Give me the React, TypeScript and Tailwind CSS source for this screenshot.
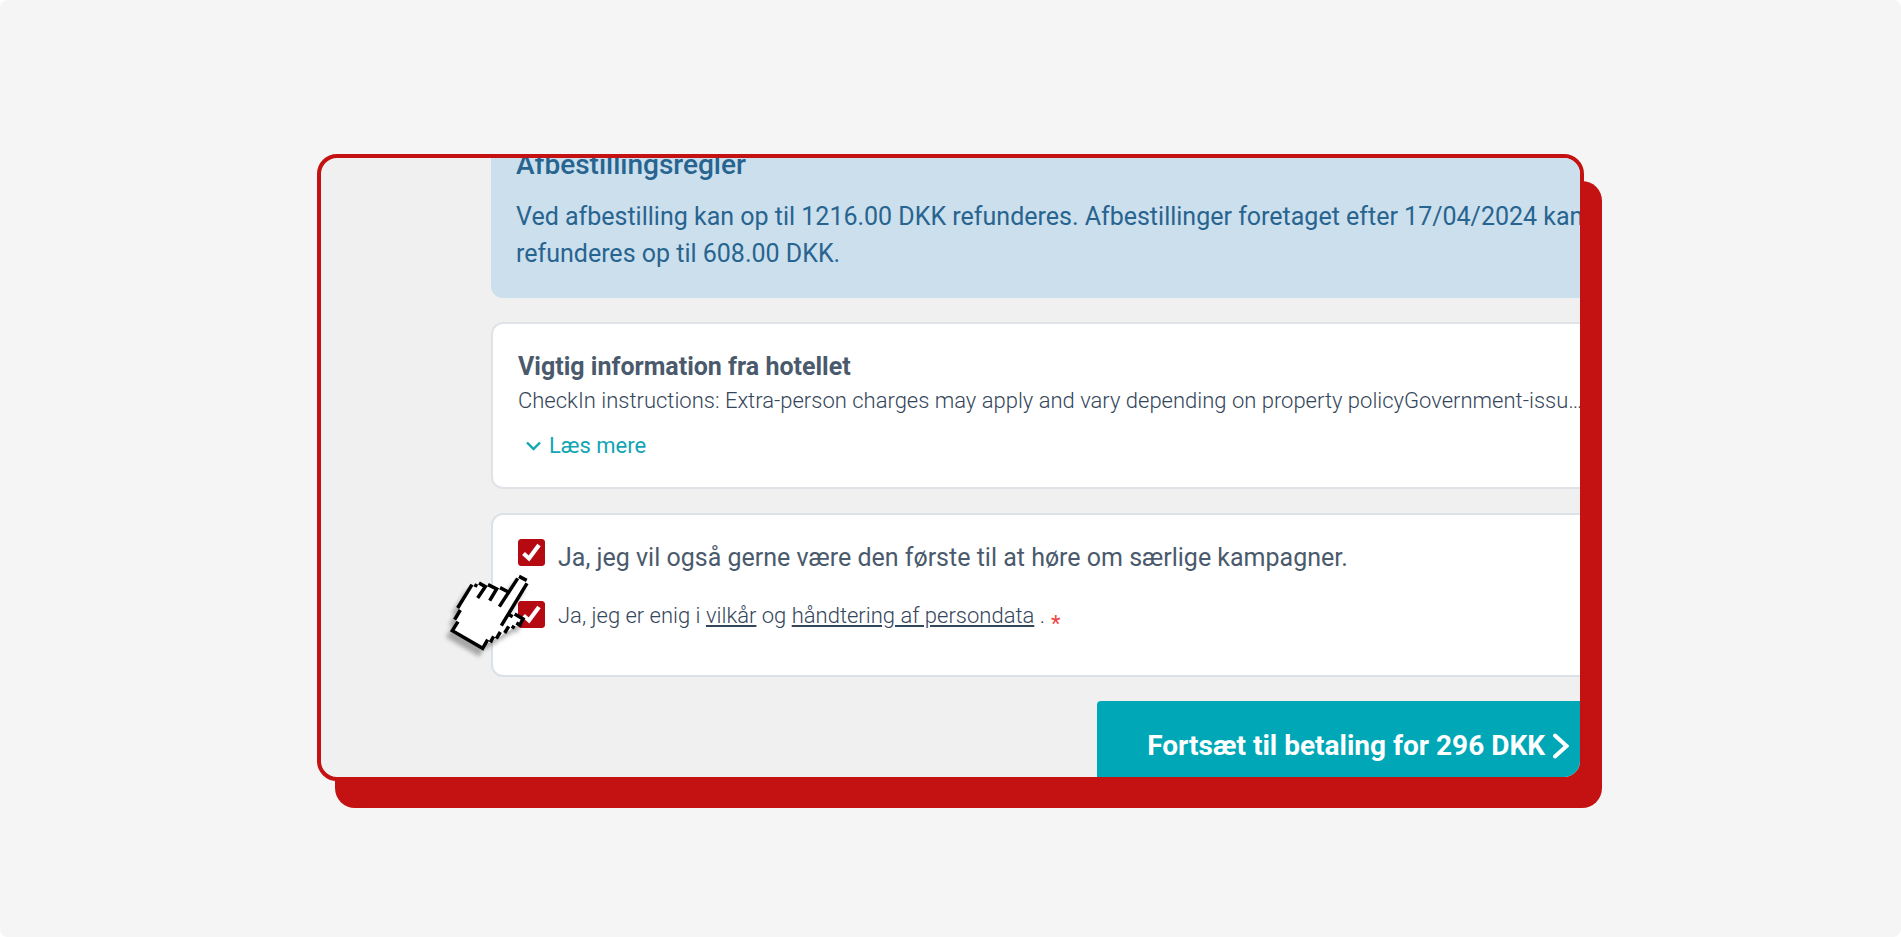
import { useState } from "react";

function CheckBox({ id, checked, onChange }: { id: string; checked: boolean; onChange: (value: boolean) => void }) {
  return (
    <span className="grid size-[27px] shrink-0">
      <input
        id={id}
        type="checkbox"
        checked={checked}
        onChange={(event) => onChange(event.target.checked)}
        className="col-start-1 row-start-1 size-full appearance-none rounded-[3px] border border-[#b50a12] bg-white checked:bg-[#b50a12]"
      />
      {checked && (
        <svg viewBox="0 0 27 27" className="pointer-events-none col-start-1 row-start-1 size-full" aria-hidden="true">
          <path d="M5.5 14.5 L11 19.5 L21 6" fill="none" stroke="#fff" strokeWidth="4.2" />
        </svg>
      )}
    </span>
  );
}

function HandCursor() {
  return (
    <svg
      viewBox="0 0 300 270"
      className="pointer-events-none absolute top-[56px] -left-[53px] h-[90px] w-[100px] overflow-visible drop-shadow-[-4px_6px_2px_rgba(0,0,0,0.3)]"
      aria-hidden="true"
    >
      <path
        fill="#fff"
        d="M95 43 L107 42 L120 38 L138 47 L145 42 L170 53 L182 52 L203 63 L230 22 L238 17 L258 25 L260 38 L205 130 L228 131 L250 143 L238 163 L220 168 L208 180 L196 184 L180 198 L170 200 L157 212 L142 216 L128 233 L37 180 L52 155 L45 143 L60 118 L54 109 Z"
      />
      <g fill="none" stroke="#000" strokeWidth="10.5">
        <path d="M237 16 L260 28" />
        <path d="M233 22 L178 107" />
        <path d="M261 37 L184 164" />
        <path d="M180 50 L205 63" />
        <path d="M144 41 L170 54 L149 89" />
        <path d="M117 36 L136 47 L113 81" />
        <path d="M103 41 L112 46" />
        <path d="M96 41 L53 111" />
        <path d="M61 117 L44 146" />
        <path d="M54 152 L37 179 L128 232 L143 206" />
        <path d="M151 214 L161 196" />
        <path d="M169 203 L181 183" />
        <path d="M194 186 L206 166" />
        <path d="M215 166 L224 171" />
        <path d="M204 129 L218 137" />
        <path d="M224 129 L249 144 L237 166" />
        <path d="M229 156 L238 161" />
      </g>
    </svg>
  );
}

export default function App() {
  const [news, setNews] = useState(true);
  const [terms, setTerms] = useState(true);

  return (
    <div className="min-h-screen bg-white font-['Roboto',sans-serif]">
      <div className="flex min-h-screen items-center justify-center rounded-lg bg-[#f5f5f5] px-[317px] pb-0.5">
        <main className="w-full overflow-hidden rounded-[20px] border-4 border-[#c41212] bg-[#f0f0f0] pl-[170px] shadow-[18px_27px_0_0_#c41212]">
          <section className="rounded-bl-xl bg-[#ccdfed] pb-[26px] pl-[25px] text-[#27648f]">
            <h2 className="-mt-[11px] text-[28px] leading-[36px] font-medium">Afbestillingsregler</h2>
            <p className="pt-[15px] text-[25px] leading-[37px] whitespace-nowrap">
              Ved afbestilling kan op til 1216.00 DKK refunderes. Afbestillinger foretaget efter 17/04/2024 kan
              <br />
              refunderes op til 608.00 DKK.
            </p>
          </section>

          <section className="mt-6 rounded-l-xl border-2 border-r-0 border-[#dfe3e7] bg-white pt-[25px] pb-6 pl-[25px] text-[#4a5a6c]">
            <h3 className="text-[25px] leading-[36px] font-bold">Vigtig information fra hotellet</h3>
            <p className="text-[22px] leading-[32px] font-light whitespace-nowrap text-[#34465a]">
              CheckIn instructions: Extra-person charges may apply and vary depending on property policyGovernment-issu…
            </p>
            <button type="button" className="mt-3 flex items-center gap-2 pl-2 text-[22px] leading-[34px] text-[#12a5b4]">
              <svg viewBox="0 0 15 10" className="h-[10px] w-[15px]" aria-hidden="true">
                <path d="M1 1.5 L7.5 8 L14 1.5" fill="none" stroke="currentColor" strokeWidth="2.4" />
              </svg>
              Læs mere
            </button>
          </section>

          <section className="relative mt-6 rounded-l-xl border-2 border-r-0 border-[#dbe1e8] bg-white pt-6 pb-9 pl-[25px] whitespace-nowrap text-[#4a5a6c]">
            <div className="flex gap-[13px]">
              <CheckBox id="news" checked={news} onChange={setNews} />
              <label htmlFor="news" className="pt-px text-[25px] leading-[36px]">
                Ja, jeg vil også gerne være den første til at høre om særlige kampagner.
              </label>
            </div>
            <div className="mt-[25px] flex gap-[13px]">
              <CheckBox id="terms" checked={terms} onChange={setTerms} />
              <div className="flex text-[22px] leading-[30px]">
                <label htmlFor="terms" className="font-light text-[#34465a]">
                  Ja, jeg er enig i{" "}
                  <a href="#vilkaar" className="underline underline-offset-2">
                    vilkår
                  </a>{" "}
                  og{" "}
                  <a href="#persondata" className="underline underline-offset-2">
                    håndtering af persondata
                  </a>{" "}
                  .
                </label>
                <span className="pt-2 pl-1.5 text-[#ef4444]">*</span>
              </div>
            </div>
            <HandCursor />
          </section>

          <div className="mt-6 flex justify-end">
            <button
              type="button"
              className="flex items-center gap-2 rounded-tl bg-[#00a8b7] pt-[26px] pr-[11px] pb-[13px] pl-[50px] text-[28px] leading-[37px] font-bold whitespace-nowrap text-white"
            >
              Fortsæt til betaling for 296 DKK
              <svg viewBox="0 0 16 26" className="h-[26px] w-4" aria-hidden="true">
                <path d="M2 2.5 L13.5 13 L2 23.5" fill="none" stroke="currentColor" strokeWidth="4" strokeLinecap="round" />
              </svg>
            </button>
          </div>
        </main>
      </div>
    </div>
  );
}
